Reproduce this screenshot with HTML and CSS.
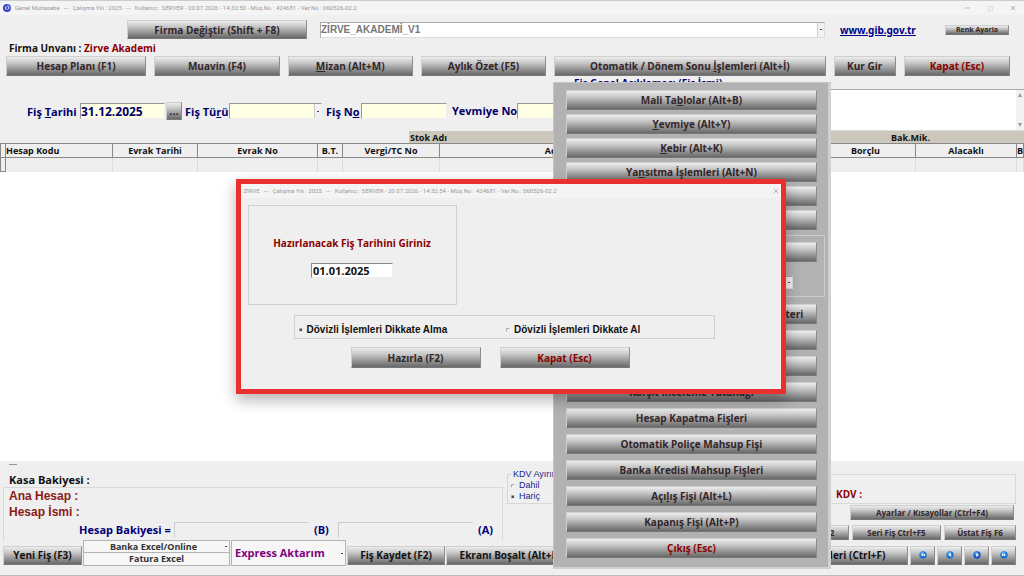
FILE: index.html
```
<!DOCTYPE html>
<html lang="tr">
<head>
    <meta charset="UTF-8">
    <title>Genel Muhasebe</title>
    <link rel="stylesheet" href="styles.css">
</head>
<body>
    <div class="window">
        <!-- title bar -->
        <header class="title-bar">
            <svg class="app-icon" viewBox="0 0 16 16"><circle cx="8" cy="8" r="8" fill="#3a3fc4"/><path d="M8 1a7 7 0 0 1 6 10L8 8z" fill="#5b8fe0"/><circle cx="8" cy="8" r="4" fill="#dfe6ff"/><path d="M6 6h4L7 10h4" fill="none" stroke="#2a2f9c" stroke-width="2"/></svg>
            <span>Genel Muhasebe</span><span>---</span><span>Çalışma Yılı : 2025</span><span>---</span><span>Kullanıcı : SERVER - 20.07.2026 - 14:32:50 - Müş.No : 424681 - Ver.No : 060526-02.2</span>
            <svg class="win-buttons" viewBox="0 0 54 8"><path d="M1 4h5" fill="none" stroke="#bbb"/><path d="M24.500 2.500h4v4h-4z" fill="none" stroke="#ddd"/><path d="M47 2l4 4M51 2l-4 4" fill="none" stroke="#aaa"/></svg>
        </header>

        <!-- company -->
        <div class="company-row">
            <button class="btn change-company">Firma Değiştir (Shift + F8)</button>
            <span class="select-wrap company-select">
                <select aria-label="Firma"><option>ZİRVE_AKADEMİ_V1</option></select>
            </span>
            <a class="site-link" href="#">www.gib.gov.tr</a>
            <button class="btn color-btn">Renk Ayarla</button>
        </div>
        <p class="company-name">Firma Unvanı : <span>Zirve Akademi</span></p>

        <nav class="toolbar">
            <button class="btn">Hesap Planı (F1)</button>
            <button class="btn">Muavin (F4)</button>
            <button class="btn"><u>M</u>izan (Alt+M)</button>
            <button class="btn">Aylık Özet (F5)</button>
            <button class="btn">Otomatik / Dönem Sonu <u>İ</u>şlemleri (Alt+İ)</button>
            <button class="btn">Kur Gir</button>
            <button class="btn red">Kapat (Esc)</button>
        </nav>

        <!-- voucher fields -->
        <div class="voucher">
            <div class="fields">
                <label for="date">Fiş <u>T</u>arihi</label>
                <input id="date" class="w-date" type="text" value="31.12.2025">
                <button class="btn dots" aria-label="Tarih seç">...</button>
                <label for="type">Fiş Tü<u>r</u>ü</label>
                <span class="select-wrap type-select"><select id="type"><option></option></select></span>
                <label for="no">Fiş N<u>o</u></label>
                <input id="no" class="w-no" type="text">
                <label class="journal-label" for="journal">Yevmiye No</label>
                <input id="journal" class="w-journal" type="text">
            </div>
            <div class="note">
                <label for="note">Fiş Genel Açıklaması (Fiş İsmi)</label>
                <div class="note-box">
                    <textarea id="note"></textarea>
                    <div class="scroll">
                        <svg viewBox="0 0 6 6"><path d="M3 1l2 4H1z" fill="#999"/></svg>
                        <svg viewBox="0 0 6 6"><path d="M1 1h4L3 5z" fill="#999"/></svg>
                    </div>
                </div>
            </div>
        </div>

        <!-- lines table -->
        <div class="band"><span>Stok Adı</span><span class="qty">Bak.Mik.</span></div>
        <main class="grid-area">
            <table class="lines">
                <colgroup>
                    <col class="c-sel"><col class="c-code"><col class="c-date"><col class="c-no"><col class="c-bt"><col class="c-tax"><col class="c-desc"><col class="c-extra"><col class="c-debit"><col class="c-credit"><col>
                </colgroup>
                <thead>
                    <tr><th></th><th class="left">Hesap Kodu</th><th>Evrak Tarihi</th><th>Evrak No</th><th>B.T.</th><th>Vergi/TC No</th><th>Açıklama</th><th></th><th>Borçlu</th><th>Alacaklı</th><th class="left">B</th></tr>
                </thead>
                <tbody>
                    <tr><td></td><td></td><td></td><td></td><td></td><td></td><td></td><td></td><td></td><td></td><td></td></tr>
                </tbody>
            </table>
        </main>

        <!-- balances -->
        <section class="summary">
            <div class="balances">
                <hr class="dash">
                <p class="cash">Kasa Bakiyesi :</p>
                <div class="account">
                    <p>Ana Hesap :</p>
                    <p>Hesap İsmi :</p>
                    <div class="balance-line">
                        <label for="bal-b">Hesap Bakiyesi =</label>
                        <input id="bal-b" type="text">
                        <span>(B)</span>
                        <input type="text" aria-label="Alacak bakiyesi">
                        <span>(A)</span>
                    </div>
                </div>
            </div>
            <fieldset class="vat-split">
                <legend>KDV Ayırımı</legend>
                <label><input type="radio" name="vat">Dahil</label>
                <label><input type="radio" name="vat" checked>Hariç</label>
            </fieldset>
            <div class="side">
                <div class="vat-box">KDV :</div>
                <button class="btn small settings">Ayarlar / Kısayollar (Ctrl+F4)</button>
                <div class="side-row">
                    <button class="btn small f2">Fiş F2</button>
                    <button class="btn small series">Seri Fiş Ctrl+F5</button>
                    <button class="btn small ustat">Üstat Fiş F6</button>
                </div>
            </div>
        </section>

        <footer class="actions">
            <button class="btn black new">Yeni Fiş (F3)</button>
            <div class="excel">
                <span class="select-wrap"><select aria-label="Excel"><option>Banka Excel/Online</option></select></span>
                <button>Fatura Excel</button>
            </div>
            <span class="select-wrap express"><select aria-label="Aktarım"><option>Express Aktarım</option></select></span>
            <button class="btn black save">Fiş Kaydet (F2)</button>
            <button class="btn black clear">Ekranı Boşalt (Alt+E)</button>
            <button class="btn black ops">Fiş İşlemleri (Ctrl+F)</button>
            <button class="btn nav" aria-label="İlk"><svg viewBox="0 0 12 12"><circle cx="6" cy="6" r="5.500" fill="#1976d2"/><circle cx="5" cy="4" r="3" fill="#5fb0f5"/><path d="M6 4L3 6l3 2zM9 4L6 6l3 2z" fill="#fff"/></svg></button>
            <button class="btn nav" aria-label="Önceki"><svg viewBox="0 0 12 12"><circle cx="6" cy="6" r="5.500" fill="#1976d2"/><circle cx="5" cy="4" r="3" fill="#5fb0f5"/><path d="M7 3L4 6l4 3z" fill="#fff"/></svg></button>
            <button class="btn nav" aria-label="Sonraki"><svg viewBox="0 0 12 12"><circle cx="6" cy="6" r="5.500" fill="#1555c8"/><circle cx="5" cy="4" r="3" fill="#4a98ee"/><path d="M5 3l4 3-4 3z" fill="#fff"/></svg></button>
            <button class="btn nav" aria-label="Son"><svg viewBox="0 0 12 12"><circle cx="6" cy="6" r="5.500" fill="#1976d2"/><circle cx="5" cy="4" r="3" fill="#5fb0f5"/><path d="M3 4l3 2-3 2zM6 4l3 2-3 2z" fill="#fff"/></svg></button>
        </footer>

        <!-- period end menu -->
        <div class="menu">
            <div class="menu-top">
                <button class="btn">Mali Ta<u>b</u>lolar (Alt+B)</button>
                <button class="btn"><u>Y</u>evmiye (Alt+Y)</button>
                <button class="btn"><u>K</u>ebir (Alt+K)</button>
                <button class="btn">Ya<u>n</u>sıtma İşlemleri (Alt+N)</button>
                <button class="btn">Kur Farkı</button>
                <button class="btn">Amortisman</button>
            </div>
            <div class="menu-group">
                <button class="btn">Enflasyon</button>
                <span class="select-wrap"><select aria-label="Dönem"><option></option></select></span>
            </div>
            <div class="menu-bottom">
                <button class="btn">Enflasyon Düzeltmesi ve Amortisman Defteri</button>
                <button class="btn">Form Ba</button>
                <button class="btn">Form Bs</button>
                <button class="btn">Karşıt İnceleme Tutanağı</button>
                <button class="btn">Hesap Kapatma Fişleri</button>
                <button class="btn">Otomatik Poliçe Mahsup Fişi</button>
                <button class="btn">Banka Kredisi Mahsup Fişleri</button>
                <button class="btn">Açı<u>l</u>ış Fişi (Alt+L)</button>
                <button class="btn">Kapanış Fişi (Alt+P)</button>
                <button class="btn red">Çıkış (Esc)</button>
            </div>
        </div>

        <!-- date dialog -->
        <div class="dialog" role="dialog" aria-label="Fiş tarihi">
            <header class="title-bar">
                <span>ZİRVE</span><span>---</span><span>Çalışma Yılı : 2025</span><span>---</span><span>Kullanıcı : SERVER - 20.07.2026 - 14:32:54 - Müş.No : 424681 - Ver.No : 060526-02.2</span>
                <svg class="close" viewBox="0 0 8 8"><path d="M1 1l6 6M7 1L1 7" stroke="#999" stroke-width="1"/></svg>
            </header>
            <div class="date-box">
                <label for="slip-date">Hazırlanacak Fiş Tarihini Giriniz</label>
                <input id="slip-date" type="text" value="01.01.2025">
            </div>
            <div class="currency">
                <label><input type="radio" name="cur" checked>Dövizli İşlemleri Dikkate Alma</label>
                <label><input type="radio" name="cur">Dövizli İşlemleri Dikkate Al</label>
            </div>
            <div class="dialog-buttons">
                <button class="btn">Hazırla (F2)</button>
                <button class="btn red">Kapat (Esc)</button>
            </div>
        </div>
    </div>
</body>
</html>
```
FILE: styles.css
```
* {
    box-sizing: border-box;
    margin: 0;
    padding: 0;
}
body {
    font: bold 10px/14px "Open Sans", "Noto Sans", sans-serif;
    color: #111;
    background: #efefef;
}
button, input, select, textarea {
    font: inherit;
    color: inherit;
    border-radius: 0;
    min-width: 0;
}
.window {
    position: relative;
    display: flex;
    flex-direction: column;
    min-height: 100vh;
    overflow: hidden;
    border-top: 1px solid #ccc;
    border-bottom: 1px solid #bbb;
}

/* title bar */
.title-bar {
    display: flex;
    align-items: center;
    gap: 4px;
    height: 14px;
    padding: 0 6px 0 3px;
    background: #f4f4f4;
    color: #999;
    font: 6px/14px Roboto, sans-serif;
    white-space: nowrap;
}
.app-icon {
    width: 8px;
    height: 8px;
}
.win-buttons {
    width: 54px;
    height: 8px;
    margin-left: auto;
}

/* shared button */
.btn {
    border: 1px solid #cfcfcf;
    border-right-color: #8c8c8c;
    border-bottom-color: #777;
    background: linear-gradient(#ededed, #c4c4c4 35%, #999 65%, #686868);
    color: #33262a;
    line-height: 12px;
    white-space: nowrap;
    overflow: hidden;
}
.btn.red {
    color: #8b0000;
}
.btn.black {
    color: #111;
}

/* select with a small arrow at the right */
.select-wrap {
    position: relative;
    display: block;
}
.select-wrap select {
    display: block;
    width: 100%;
    height: 100%;
    appearance: none;
    border: 1px solid #aaa;
    border-right-color: #ddd;
    border-bottom-color: #ddd;
    background: #fff;
}
.select-wrap::after {
    content: "";
    position: absolute;
    top: 1px;
    right: 1px;
    bottom: 1px;
    width: 6px;
    border-left: 1px solid #ccc;
    background: linear-gradient(#444, #444) center / 2px 1px no-repeat #f2f2f2;
}

/* company */
.company-row {
    display: flex;
    align-items: center;
    height: 29px;
    padding: 0 15px 0 127px;
}
.change-company {
    width: 180px;
    height: 19px;
}
.company-select {
    flex: 1;
    height: 16px;
    margin: 0 15px 0 13px;
}
.company-select select {
    color: #777;
    font: bold 10px/14px "Liberation Sans", Arial, sans-serif;
}
.site-link {
    width: 76px;
    color: #00008b;
    font: bold 10px/14px "Noto Sans", sans-serif;
}
.color-btn {
    width: 64px;
    height: 10px;
    margin-left: 29px;
    font-size: 7px;
    line-height: 8px;
}
.company-name {
    height: 12px;
    padding-left: 9px;
    line-height: 8px;
}
.company-name span {
    color: #8b0000;
}

/* toolbar */
.toolbar {
    display: grid;
    grid-template-columns: 140fr 125fr 125fr 125fr 271fr 62fr 106fr;
    gap: 8px;
    padding: 0 14px 0 6px;
}
.toolbar .btn {
    height: 20px;
}

/* voucher */
.voucher {
    display: flex;
    height: 55px;
    color: #00006e;
}
.fields {
    display: flex;
    align-items: center;
    width: 574px;
    padding: 15px 0 0 27px;
    font-size: 11px;
}
.fields label {
    width: 53px;
    padding-top: 2px;
    white-space: nowrap;
}
.fields label[for="type"] {
    width: 44px;
    margin-left: 3px;
}
.fields label[for="no"] {
    width: 35px;
    margin-left: 4px;
}
.fields .journal-label {
    width: 65px;
    margin-left: 5px;
    padding-top: 0;
}
.fields input, .type-select select {
    height: 16px;
    border: 1px solid #999;
    border-right-color: #eee;
    border-bottom-color: #eee;
    background: #ffffe6;
}
.fields .w-date {
    width: 85px;
    font-size: 12px;
}
.w-no {
    width: 86px;
}
.w-journal {
    width: 50px;
}
.dots {
    width: 16px;
    height: 18px;
    margin-left: 1px;
}
.type-select {
    width: 93px;
    height: 16px;
}
.note {
    flex: 1;
    display: flex;
    flex-direction: column;
}
.note label {
    height: 13px;
}
.note-box {
    flex: 1;
    display: flex;
    border-top: 1px solid #aaa;
    border-bottom: 1px solid #ddd;
}
.note textarea {
    flex: 1;
    border: 0;
    background: #fff;
    resize: none;
}
.scroll {
    display: flex;
    flex-direction: column;
    justify-content: space-between;
    width: 8px;
    padding: 2px 1px;
    background: #f2f2f2;
}
.scroll svg {
    width: 6px;
    height: 6px;
}

/* table */
.band {
    display: flex;
    justify-content: space-between;
    height: 12px;
    margin-left: 409px;
    padding: 0 94px 0 1px;
    background: #cbc7bb;
    font-size: 9px;
    line-height: 14px;
}
.grid-area {
    flex: 1;
    background: #fff;
}
.lines {
    width: 100%;
    table-layout: fixed;
    border-collapse: collapse;
    background: #efefef;
    font-size: 9px;
    line-height: 12px;
}
.lines th {
    height: 14px;
    border: 1px solid #888;
    overflow: hidden;
    white-space: nowrap;
}
.lines th.left {
    text-align: left;
}
.lines td {
    height: 14px;
    border-right: 1px solid #dcdcdc;
}
.lines td:first-child {
    border: 1px solid #888;
}
.c-sel { width: 5px; }
.c-code { width: 107px; }
.c-date { width: 85px; }
.c-no { width: 120px; }
.c-bt { width: 25px; }
.c-tax { width: 97px; }
.c-desc { width: 252px; }
.c-extra { width: 124px; }
.c-debit { width: 100px; }
.c-credit { width: 101px; }

/* balances */
.summary {
    display: flex;
    gap: 4px;
    height: 79px;
    padding: 0 8px 0 3px;
}
.balances {
    width: 500px;
    padding-top: 3px;
}
.dash {
    width: 8px;
    margin: 0 0 8px 6px;
    border: 0;
    border-top: 1px solid #999;
}
.cash {
    padding-left: 6px;
    font-size: 11px;
}
.account {
    height: 53px;
    border: 1px solid #d8d8d8;
    border-bottom: 0;
}
.account p {
    padding-left: 5px;
    color: #8b1a1a;
    font: bold 12px/16px "Liberation Sans", Arial, sans-serif;
}
.balance-line {
    display: flex;
    align-items: center;
    padding: 2px 0 0 75px;
    color: #00007b;
    font-size: 11px;
}
.balance-line label {
    width: 95px;
    white-space: nowrap;
}
.balance-line input {
    width: 135px;
    height: 16px;
    border: 1px solid #ccc;
    border-right-color: #eee;
    border-bottom-color: #eee;
    background: #efefef;
}
.balance-line span {
    width: 29px;
    padding-left: 5px;
}
.vat-split {
    width: 90px;
    height: 35px;
    margin-top: 8px;
    padding-left: 3px;
    border: 1px solid #d8d8d8;
    color: #22228b;
    font: 9px/11px "Liberation Sans", Arial, sans-serif;
}
.vat-split legend {
    padding: 0 2px;
}
.vat-split label {
    display: flex;
    align-items: center;
    gap: 4px;
}
input[type="radio"] {
    appearance: none;
    width: 4px;
    height: 4px;
    border: 1px solid #999;
    border-right-color: #eee;
    border-bottom-color: #eee;
    border-radius: 50%;
    background: #fff;
}
input[type="radio"]:checked {
    background: #444;
}
.side {
    display: flex;
    flex-direction: column;
    width: 210px;
    margin-left: auto;
    padding-top: 13px;
}
.vat-box {
    height: 30px;
    padding: 12px 0 0 29px;
    border: 1px solid #d8d8d8;
    color: #8b0000;
}
.btn.small {
    height: 15px;
    font-size: 8px;
}
.settings {
    align-self: flex-end;
    width: 164px;
    margin: 1px 2px 5px 0;
}
.side-row {
    display: flex;
    gap: 3px;
}
.f2 {
    width: 43px;
    padding-right: 8px;
}
.series {
    flex: 1;
}
.ustat {
    width: 72px;
}

/* bottom buttons */
.actions {
    display: flex;
    align-items: center;
    gap: 1px;
    height: 35px;
    padding: 0 8px 9px 3px;
}
.actions .btn {
    height: 19px;
    margin-top: 4px;
}
.new {
    width: 79px;
}
.excel {
    width: 147px;
    font-size: 9px;
    color: #333;
}
.excel .select-wrap, .excel button {
    display: block;
    width: 100%;
    height: 13px;
    line-height: 10px;
}
.excel select {
    padding-right: 6px;
    text-align: center;
    text-align-last: center;
}
.excel select, .excel button, .express select {
    border: 1px solid #b4b4b4;
    background: #f6f6f6;
}
.excel button {
    border-top: 0;
}
.express {
    width: 115px;
    height: 26px;
}
.express select {
    padding-left: 3px;
    color: #800080;
    font-size: 11px;
}
.excel .select-wrap::after, .express::after {
    border-left: 0;
    background-color: transparent;
}
.save {
    width: 98px;
}
.clear {
    width: 128px;
}
.ops {
    width: 144px;
    margin-left: auto;
}
.nav {
    width: 25px;
    margin-left: 1px;
}
.nav svg {
    display: block;
    width: 8px;
    height: 8px;
    margin: 0 auto;
}

/* menu lies over the table */
.menu {
    position: absolute;
    top: 81px;
    left: 54%;
    width: 278px;
    padding: 7px 3px 9px 4px;
    border: 1px solid #c4c4c4;
    border-right: 3px solid #d0d0d0;
    border-bottom: 2px solid #d0d0d0;
    background: #b2b2b2;
}
.menu-top, .menu-bottom {
    display: grid;
    gap: 4px;
    padding: 0 8px;
}
.menu .btn {
    height: 20px;
}
.menu-group {
    height: 62px;
    margin: 5px 0 7px;
    padding: 6px 7px;
    border: 1px solid #ccc;
}
.menu-group .btn {
    display: block;
    width: 100%;
}
.menu-group .select-wrap {
    width: 100px;
    height: 13px;
    margin: 14px 24px 0 auto;
}
.menu-bottom {
    gap: 6px;
}

/* dialog */
.dialog {
    position: absolute;
    top: 178px;
    left: 23%;
    width: 550px;
    padding-bottom: 21px;
    border: 5px solid #e93030;
    background: #efefef;
    box-shadow: 0 6px 14px rgba(0, 0, 0, .3);
}
.close {
    width: 6px;
    height: 6px;
    margin: 0 -4px 0 auto;
}
.date-box {
    display: flex;
    flex-direction: column;
    align-items: center;
    gap: 13px;
    width: 209px;
    height: 100px;
    margin: 7px 0 10px 7px;
    padding-top: 30px;
    border: 1px solid #d0d0d0;
}
.date-box label {
    color: #8b0000;
}
.date-box input {
    width: 82px;
    height: 15px;
    padding-left: 1px;
    border: 1px solid #888;
    border-right-color: #eee;
    border-bottom-color: #eee;
    background: #fff;
    font-size: 11px;
}
.currency {
    display: flex;
    width: 421px;
    height: 24px;
    margin-left: 53px;
    padding: 3px 0 0 4px;
    border: 1px solid #d0d0d0;
    font: bold 10px/14px "Liberation Sans", Arial, sans-serif;
}
.currency label {
    display: flex;
    align-items: center;
    gap: 4px;
    width: 208px;
    padding-top: 3px;
}
.dialog-buttons {
    display: flex;
    gap: 19px;
    margin: 8px 0 0 110px;
}
.dialog-buttons .btn {
    width: 130px;
    height: 21px;
}
```
